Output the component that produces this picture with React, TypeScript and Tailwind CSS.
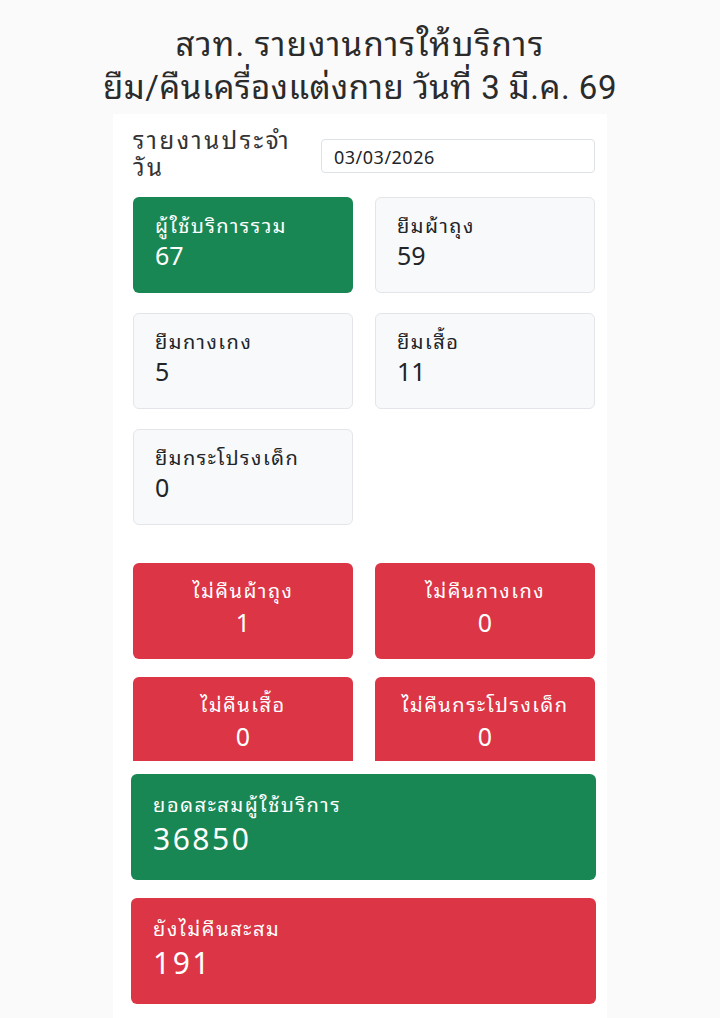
import React from "react";

const thai = { fontFamily: '"Noto Sans Thai Looped", "Noto Sans", sans-serif' };
const title = { fontFamily: 'Roboto, "Noto Sans Thai Looped", sans-serif' };

function LightCard({ label, value }: { label: string; value: string }) {
  return (
    <div className="h-[96px] rounded-[6px] border border-[#e3e5e8] bg-[#f8f9fa] px-[21px] pt-[13px] text-[#212529]">
      <div className="text-[20px] leading-[26px] tracking-[1.5px]">{label}</div>
      <div className="mt-[2px] text-[25px] leading-[30px]">{value}</div>
    </div>
  );
}

function GreenCard({ label, value }: { label: string; value: string }) {
  return (
    <div className="h-[96px] rounded-[6px] bg-[#198754] px-[22px] pt-[14px] text-white">
      <div className="text-[20px] leading-[26px] tracking-[1.5px]">{label}</div>
      <div className="mt-[2px] text-[25px] leading-[30px]">{value}</div>
    </div>
  );
}

function RedCard({ label, value }: { label: string; value: string }) {
  return (
    <div className="h-[96px] shrink-0 rounded-[6px] bg-[#dc3545] pt-[13px] text-center text-white">
      <div className="text-[20px] leading-[26px] tracking-[1.5px]">{label}</div>
      <div className="mt-[4px] text-[25px] leading-[30px]">{value}</div>
    </div>
  );
}

function BigCard({ label, value, color }: { label: string; value: string; color: string }) {
  return (
    <div className={`h-[106px] rounded-[6px] ${color} px-[22px] pt-[16px] text-white`}>
      <div className="text-[20px] leading-[26px] tracking-[1.6px]">{label}</div>
      <div className="mt-[3px] text-[30px] leading-[36px] tracking-[2.5px]">{value}</div>
    </div>
  );
}

export default function App() {
  return (
    <div className="min-h-[1018px] bg-[#fafafa]" style={thai}>
      <div className="pt-[23px] text-center text-[33px] leading-[43px] tracking-[0.5px] text-[#2b2b2b]" style={title}>
        <div className="tracking-[1.2px]">สวท. รายงานการให้บริการ</div>
        <div>ยืม/คืนเครื่องแต่งกาย วันที่ 3 มี.ค. 69</div>
      </div>
      <div className="mx-auto mt-[5px] min-h-[904px] w-[494px] bg-white pb-[20px]">
        <div className="flex items-start pl-[20px] pr-[12px] pt-[11px]">
          <div className="w-[188px] text-[24px] leading-[27px] tracking-[2.5px] text-[#333]">
            รายงานประจำ
            <br />
            วัน
          </div>
          <div className="mt-[14px] flex h-[34px] flex-1 items-center rounded-[4px] border border-[#dee2e6] px-[12px] text-[18px] tracking-[0.5px] text-[#212529]">
            03/03/2026
          </div>
        </div>
        <div className="mt-[18px] grid grid-cols-2 gap-x-[22px] gap-y-[20px] pl-[20px] pr-[12px]">
          <GreenCard label="ผู้ใช้บริการรวม" value="67" />
          <LightCard label="ยืมผ้าถุง" value="59" />
          <LightCard label="ยืมกางเกง" value="5" />
          <LightCard label="ยืมเสื้อ" value="11" />
          <LightCard label="ยืมกระโปรงเด็ก" value="0" />
        </div>
        <div className="mt-[38px] grid h-[198px] grid-cols-2 gap-x-[22px] gap-y-[18px] overflow-hidden pl-[20px] pr-[12px]">
          <RedCard label="ไม่คืนผ้าถุง" value="1" />
          <RedCard label="ไม่คืนกางเกง" value="0" />
          <RedCard label="ไม่คืนเสื้อ" value="0" />
          <RedCard label="ไม่คืนกระโปรงเด็ก" value="0" />
        </div>
        <div className="mt-[13px] flex flex-col gap-[18px] pl-[18px] pr-[11px]">
          <BigCard label="ยอดสะสมผู้ใช้บริการ" value="36850" color="bg-[#198754]" />
          <BigCard label="ยังไม่คืนสะสม" value="191" color="bg-[#dc3545]" />
        </div>
      </div>
    </div>
  );
}
